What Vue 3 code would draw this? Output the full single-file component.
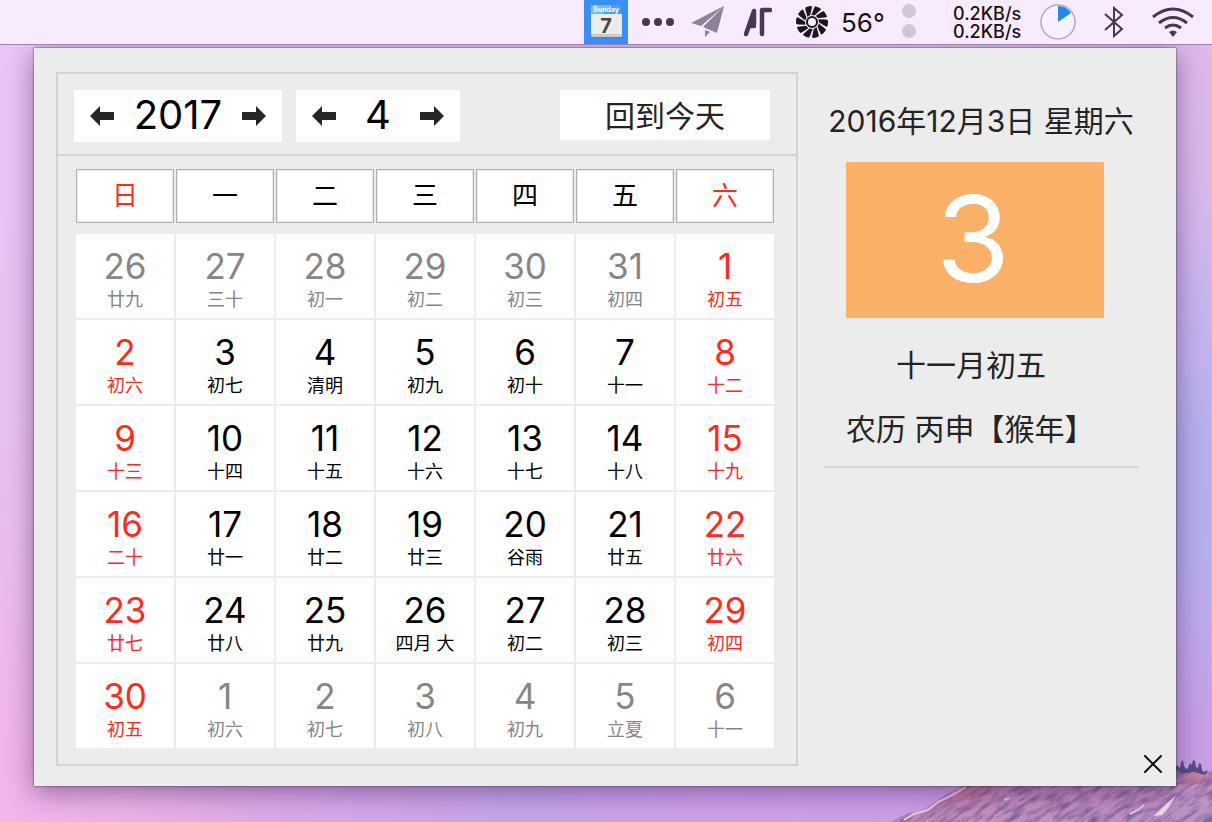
<script setup>
const weekdays = ['日', '一', '二', '三', '四', '五', '六']

const lunar = [
  ['26 廿九', '27 三十', '28 初一', '29 初二', '30 初三', '31 初四', '1 初五'],
  ['2 初六', '3 初七', '4 清明', '5 初九', '6 初十', '7 十一', '8 十二'],
  ['9 十三', '10 十四', '11 十五', '12 十六', '13 十七', '14 十八', '15 十九'],
  ['16 二十', '17 廿一', '18 廿二', '19 廿三', '20 谷雨', '21 廿五', '22 廿六'],
  ['23 廿七', '24 廿八', '25 廿九', '26 四月 大', '27 初二', '28 初三', '29 初四'],
  ['30 初五', '1 初六', '2 初七', '3 初八', '4 初九', '5 立夏', '6 十一']
]

const weeks = lunar.map((row, r) =>
  row.map((text, c) => {
    const cut = text.indexOf(' ')
    const day = Number(text.slice(0, cut))
    const outside = (r === 0 && day > 20) || (r === 5 && day < 20)
    return { day, note: text.slice(cut + 1), outside, weekend: !outside && (c === 0 || c === 6) }
  })
)

const traffic = '0.2KB/s\n0.2KB/s'
const blades = Array.from({ length: 10 }, (_, i) => i * 36)
</script>

<template>
  <div class="desktop">
    <svg class="mountain" viewBox="0 0 330 66" aria-hidden="true">
      <defs>
        <linearGradient id="rock" x1="0" y1="0" x2="1" y2="1">
          <stop offset="0" stop-color="#b877a3" />
          <stop offset="0.6" stop-color="#c892be" />
          <stop offset="1" stop-color="#b893c8" />
        </linearGradient>
        <filter id="grain" x="0" y="0" width="100%" height="100%" color-interpolation-filters="sRGB">
          <feTurbulence type="fractalNoise" baseFrequency="0.05 0.22" numOctaves="4" seed="4" />
          <feColorMatrix values="0 0 0 0 0.42  0 0 0 0 0.33  0 0 0 0 0.58  2 0 0 0 -0.8" />
        </filter>
        <clipPath id="ridge">
          <path d="M8 66 24 58 40 54 54 45 70 35 84 28 110 14 200 4 294 14 300 18 312 16 322 19 330 14V66Z" />
        </clipPath>
      </defs>
      <path fill="#544f86" d="M290 20V8l3-3 1 4 2 1 2 2 1-6 2-2 1 6 2 3 2-1 2-5 2 2 1-5 2 1 1 6 2 1 1-5 2 1 1 6 2 2 3-2 1 4 2-3 1 3V24H290Z" />
      <g clip-path="url(#ridge)">
        <path fill="url(#rock)" d="M0 0H330V66H0Z" />
        <path fill="#cc7390" d="M290 14 330 16V25L300 30ZM60 48 84 28H128L96 42Z" opacity=".6" />
        <g transform="rotate(-32 200 30)">
          <path d="M0 -130H360V200H0Z" filter="url(#grain)" />
        </g>
        <path fill="none" stroke="#e6cfe0" stroke-width="2" d="m22 64 10-6 14-4 10-8 18-9 10-6M122 44l5-2M248 58l8-4 6-5" />
        <path fill="#f0dfe9" d="m272 60 10-10 12-11-7 12-7 8Z" />
      </g>
    </svg>

    <header class="menubar">
      <svg class="app-icon" viewBox="0 0 44 44" role="img" aria-label="Calendar">
        <path fill="#398ff5" d="M0 0H44V44H0Z" />
        <path fill="#1c6fc8" opacity=".4" d="M6 35H38V38H6Z" />
        <path fill="#46a4ef" d="M7 5H37V15H7Z" />
        <path fill="#72bdf4" d="M7 5H26L18 15H7Z" />
        <path fill="#ececeb" d="M7 14H38V35q0 2-2 2H9q-2 0-2-2Z" />
        <path fill="#c9cbca" d="M7 34H38v1q0 2-2 2H9q-2 0-2-2Z" />
        <text x="22" y="12" class="icon-weekday">Sunday</text>
        <text x="22" y="33" class="icon-day">7</text>
      </svg>
      <svg class="dots" viewBox="0 0 32 10" aria-hidden="true">
        <g fill="#4a3850"><circle cx="4" cy="5" r="4" /><circle cx="16" cy="5" r="4" /><circle cx="28" cy="5" r="4" /></g>
      </svg>
      <svg class="plane" viewBox="0 0 34 34" aria-hidden="true">
        <path fill="#8f8197" d="M33 1 0 18 10 21ZM33 1 12 22 26 28ZM14 25 19 27 14 32Z" />
      </svg>
      <svg class="at" viewBox="0 0 28 30" aria-hidden="true">
        <path fill="none" stroke="#49384f" stroke-width="4.5" stroke-linecap="round" stroke-linejoin="round" d="M2 27 10 4V17M6 19H10M18 27V3H26" />
      </svg>
      <svg class="fan" viewBox="0 0 32 32" aria-hidden="true">
        <circle cx="16" cy="16" r="16" fill="#1b171d" />
        <path v-for="angle in blades" :key="angle" :transform="`rotate(${angle} 16 16)`" fill="#f7ebfd" d="M14 10 16 1 15 -1 20 -1 18 2 15 10Z" />
        <circle cx="16" cy="16" r="7" fill="#f7ebfd" />
        <circle cx="16" cy="16" r="5" fill="none" stroke="#1b171d" stroke-width="2" />
      </svg>
      <span class="temperature">56°</span>
      <svg class="lights" viewBox="0 0 14 34" aria-hidden="true">
        <g fill="#d0c6d5"><circle cx="7" cy="7" r="7" /><circle cx="7" cy="27" r="7" /></g>
      </svg>
      <span class="network">{{ traffic }}</span>
      <svg class="pie" viewBox="0 0 36 36" aria-hidden="true">
        <circle cx="18" cy="18" r="17" fill="#f9f0fd" stroke="#b4a9bb" stroke-width="1.5" />
        <path fill="#2189e8" d="M18 18V2A16 16 0 0 1 31 9Z" />
      </svg>
      <svg class="bluetooth" viewBox="0 0 20 32" aria-hidden="true">
        <path fill="none" stroke="#49374f" stroke-width="2" d="M1 8 18 23 10 30V2L18 9 1 24" />
      </svg>
      <svg class="wifi" viewBox="0 0 42 30" aria-hidden="true">
        <g fill="none" stroke="#49374f" stroke-width="3">
          <path d="M1 10Q21 -6 41 10" /><path d="M7 16Q21 5 35 16" /><path d="M13 21Q21 15 29 21" />
        </g>
        <path fill="#49374f" d="m21 30-4-5q4-3 8 0Z" />
      </svg>
    </header>

    <main class="panel">
      <section class="calendar">
        <div class="toolbar">
          <div class="stepper year">
            <button type="button" aria-label="上一年"><svg viewBox="0 0 24 20"><path d="M0 10 10 0V6H24V14H10V20Z" /></svg></button>
            <output>2017</output>
            <button type="button" aria-label="下一年"><svg viewBox="0 0 24 20"><path d="M24 10 14 0V6H0V14H14V20Z" /></svg></button>
          </div>
          <div class="stepper month">
            <button type="button" aria-label="上个月"><svg viewBox="0 0 24 20"><path d="M0 10 10 0V6H24V14H10V20Z" /></svg></button>
            <output>4</output>
            <button type="button" aria-label="下个月"><svg viewBox="0 0 24 20"><path d="M24 10 14 0V6H0V14H14V20Z" /></svg></button>
          </div>
          <button type="button" class="today">回到今天</button>
        </div>
        <table class="days">
          <thead>
            <tr>
              <th v-for="(name, i) in weekdays" :key="name" scope="col">
                <span class="weekday" :class="{ weekend: i === 0 || i === 6 }">{{ name }}</span>
              </th>
            </tr>
          </thead>
          <tbody>
            <tr v-for="(week, r) in weeks" :key="r">
              <td v-for="(cell, c) in week" :key="c">
                <button type="button" class="cell" :class="{ weekend: cell.weekend, outside: cell.outside }">
                  <span class="number">{{ cell.day }}</span>
                  <span class="note">{{ cell.note }}</span>
                </button>
              </td>
            </tr>
          </tbody>
        </table>
      </section>

      <aside class="detail">
        <p class="date">2016年12月3日 星期六</p>
        <div class="big-day">3</div>
        <p class="lunar-date">十一月初五</p>
        <p class="lunar-year">农历 丙申【猴年】</p>
        <hr />
        <button type="button" class="close" aria-label="关闭">
          <svg viewBox="0 0 18 18"><path d="M1 1 17 17M17 1 1 17" /></svg>
        </button>
      </aside>
    </main>
  </div>
</template>

<style>
body {
  background: #d9b3ec;
}
</style>

<style scoped>
.desktop {
  position: relative;
  box-sizing: border-box;
  min-height: 100vh;
  padding-bottom: 36px;
  overflow: hidden;
  color: #242424;
  font-family: Inter, "Noto Sans CJK SC", sans-serif;
  background:
    linear-gradient(to right, transparent 0%, #ecb3e9 10%, #dba9e8 24%, #c5a6e9 42%, #d0a1e8 62%, #c79fe5 90%, transparent 97%) bottom / 100% 48px no-repeat,
    linear-gradient(to bottom, #dcbaed 0%, #dab9ed 22%, #b5b0ef 54%, #b7afee 68%, #c7a0e8 88%, #c79fe5 100%) right top / 5% 100% no-repeat,
    linear-gradient(to right, transparent 75%, #dcbaed 95%),
    linear-gradient(to bottom, #eac5f8 0%, #eac5f8 20%, #e6c3f2 48%, #f2b6ea 90%);
}

button {
  margin: 0;
  padding: 0;
  border: 0;
  background: none;
  color: inherit;
  font: inherit;
}

svg {
  display: block;
  flex: none;
}

p {
  margin: 0;
}

.mountain {
  position: absolute;
  right: 0;
  bottom: 0;
  width: 330px;
  height: 66px;
}

.menubar {
  position: relative;
  z-index: 1;
  display: flex;
  align-items: center;
  justify-content: flex-end;
  height: 44px;
  padding-right: 18px;
  background: #f7ebfd;
  border-bottom: 1px solid #a080ae;
  color: #171217;
}

.app-icon { width: 44px; height: 44px; }
.icon-weekday { fill: #fff; font-size: 7px; font-weight: 700; text-anchor: middle; }
.icon-day { fill: #494949; font-size: 20px; font-weight: 700; text-anchor: middle; }
.dots { width: 32px; height: 10px; margin-left: 14px; }
.plane { width: 34px; height: 34px; margin-left: 17px; }
.at { width: 28px; height: 30px; margin-left: 19px; }
.fan { width: 32px; height: 32px; margin-left: 24px; }
.temperature { width: 46px; margin-left: 13px; font-size: 26px; }
.lights { width: 14px; height: 34px; margin-left: 15px; padding-bottom: 2px; }
.network { width: 71px; margin-left: 37px; padding-top: 2px; font-size: 18px; font-weight: 500; line-height: 18px; white-space: pre; }
.pie { width: 36px; height: 36px; margin-left: 16px; }
.bluetooth { width: 20px; height: 32px; margin-left: 28px; }
.wifi { width: 42px; height: 30px; margin-left: 28px; }

.panel {
  position: relative;
  display: flex;
  margin: 3px 36px 0 34px;
  padding: 24px 38px 20px 22px;
  background: #ececec;
  box-shadow: 0 0 2px rgba(50, 20, 70, 0.8), 0 6px 26px rgba(60, 20, 80, 0.5);
}

.calendar {
  flex: 1;
  border: 2px solid #d4d4d4;
}

.toolbar {
  display: flex;
  align-items: flex-start;
  gap: 14px;
  padding: 16px 26px 12px 16px;
  border-bottom: 2px solid #d4d4d4;
}

.stepper {
  display: flex;
  align-items: center;
  justify-content: space-between;
  box-sizing: border-box;
  height: 52px;
  padding: 0 16px;
  background: #fff;
  color: #000;
  font-size: 40px;
  line-height: 48px;
}

.stepper output { padding-bottom: 2px; }
.stepper svg { width: 24px; height: 20px; fill: #262626; }
.year { width: 208px; }
.month { width: 164px; }

.today {
  width: 210px;
  height: 50px;
  margin-left: auto;
  padding-bottom: 2px;
  background: #fff;
  font-size: 30px;
}

.days {
  box-sizing: border-box;
  width: calc(100% - 36px);
  margin: 11px 20px 14px 16px;
  border-spacing: 2px;
  table-layout: fixed;
}

th, td { padding: 0; }
th { padding-bottom: 9px; font-weight: 400; }

.weekday {
  display: block;
  border: 1px solid #b0b0b0;
  background: #fff;
  box-shadow: inset 0 0 0 1px #ececec;
  color: #000;
  font-size: 26px;
  line-height: 52px;
}

.cell {
  display: flex;
  flex-direction: column;
  align-items: center;
  gap: 2px;
  width: 100%;
  padding: 12px 0 6px;
  background: #fff;
  color: #000;
}

.number { font-size: 35px; line-height: 40px; }
.note { font-size: 18px; line-height: 24px; white-space: nowrap; }
.weekend { color: #ff2a1c; }
.outside { color: #868686; }

.detail {
  width: 314px;
  margin-left: 26px;
  font-size: 30px;
  line-height: 44px;
  text-align: center;
  white-space: nowrap;
}

.date { padding-top: 27px; }

.big-day {
  margin: 19px 34px 0 22px;
  padding: 0 4px 2px 0;
  background: #f9b168;
  color: #fff;
  font-size: 120px;
  line-height: 154px;
}

.lunar-date { margin: 25px 42px 0 22px; }
.lunar-year { margin: 20px 0 0 22px; text-align: left; }

hr {
  height: 2px;
  margin: 15px 0 0;
  border: 0;
  background: #d4d4d4;
}

.close {
  position: absolute;
  right: 14px;
  bottom: 13px;
}

.close svg {
  width: 18px;
  height: 18px;
  fill: none;
  stroke: #111;
  stroke-width: 2;
  stroke-linecap: round;
}
</style>
